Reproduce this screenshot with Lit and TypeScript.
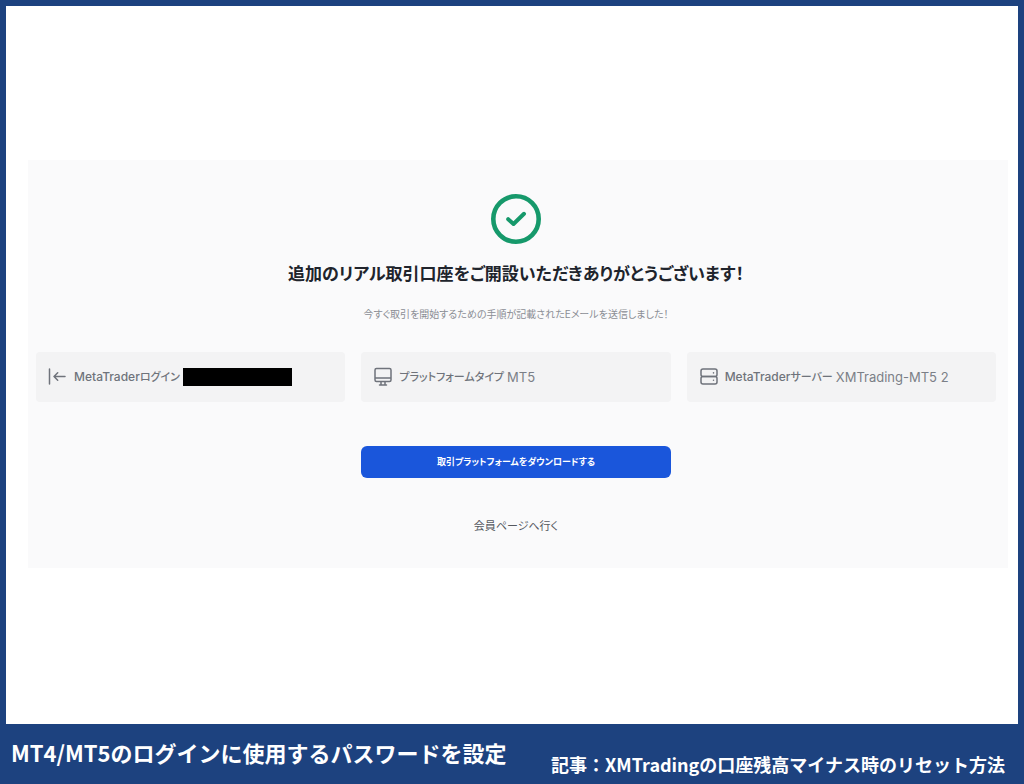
import { LitElement, html, css, svg } from "lit";
import { customElement } from "lit/decorators.js";

const icons = {
  login: svg`<path d="M1.500 2v15M6 9.500h11M9.700 5.800 6 9.500l3.700 3.700" />`,
  platform: svg`<path d="M3.500 1.500h13a1.500 1.500 0 0 1 1.500 1.500v10a1.500 1.500 0 0 1-1.500 1.500h-13A1.500 1.500 0 0 1 2 13V3A1.500 1.500 0 0 1 3.500 1.500zM2 11h16M8 14.500v3M12 14.500v3M6.500 18h7" />`,
  server: svg`<rect x="2" y="2" width="16" height="7.500" rx="2" /><rect x="2" y="9.500" width="16" height="7.500" rx="2" /><path d="M14.500 5.800v.1M14.500 13.200v.1" />`,
};

@customElement("app-root")
export class AppRoot extends LitElement {
  static styles = css`
    :host {
      display: flex;
      flex-direction: column;
      box-sizing: border-box;
      min-height: 100vh;
      padding: 6px 6px 0;
      background: #1d427f;
      font-family: Inter, "Noto Sans CJK JP", sans-serif;
    }
    .page {
      flex: 1;
      display: flex;
      flex-direction: column;
      justify-content: center;
      background: #fff;
      padding: 0 10px 2px 22px;
    }
    .panel {
      display: flex;
      flex-direction: column;
      align-items: center;
      background: #fafafb;
      padding: 32px 12px 32px 8px;
      font-feature-settings: "palt";
    }
    .check {
      display: block;
      width: 54px;
      height: 54px;
      fill: none;
      stroke: #16996b;
      stroke-linecap: round;
      stroke-linejoin: round;
    }
    h1 {
      margin: 12px 0 0;
      font-size: 17px;
      line-height: 32px;
      font-weight: 700;
      color: #20242c;
    }
    .note {
      margin: 14px 0 0;
      font-size: 10px;
      line-height: 20px;
      color: #8b8e95;
    }
    .cards {
      display: grid;
      grid-template-columns: repeat(3, 1fr);
      gap: 16px;
      width: 100%;
      margin: 28px 0 0;
    }
    .card {
      display: flex;
      align-items: center;
      box-sizing: border-box;
      height: 50px;
      padding: 0 12px;
      border-radius: 4px;
      background: #f3f3f4;
      font-size: 13px;
      line-height: 20px;
      color: #7b7f87;
    }
    .icon {
      width: 20px;
      height: 20px;
      margin-right: 6px;
      fill: none;
      stroke: #6f737b;
      stroke-width: 1.5;
      stroke-linecap: round;
      stroke-linejoin: round;
    }
    dt {
      font-size: 12px;
      font-weight: 500;
      color: #6f737b;
    }
    .kana {
      font-size: 11px;
    }
    dd {
      margin: 0 0 0 3px;
    }
    .redacted {
      width: 109px;
      height: 18px;
      background: #000;
    }
    .download {
      width: calc((100% - 32px) / 3);
      height: 32px;
      margin-top: 44px;
      padding: 0;
      border: 0;
      border-radius: 6px;
      background: #1a56db;
      color: #fff;
      font: 700 9px/20px Inter, "Noto Sans CJK JP", sans-serif;
      font-feature-settings: "palt";
      cursor: pointer;
    }
    .members {
      margin-top: 38px;
      font-size: 11px;
      line-height: 20px;
      color: #55585f;
      text-decoration: none;
    }
    .caption {
      display: flex;
      justify-content: space-between;
      align-items: center;
      box-sizing: border-box;
      height: 60px;
      padding: 0 13px 4px 5px;
      color: #fff;
      font-family: "Noto Sans CJK JP", sans-serif;
      font-weight: 700;
      white-space: nowrap;
    }
    .title {
      font-size: 22px;
      line-height: 32px;
    }
    .article {
      align-self: flex-end;
      font-size: 18px;
      line-height: 32px;
    }
  `;

  private card(icon: unknown, latin: string, kana: string, value: unknown) {
    return html`<div class="card">
      <svg class="icon" viewBox="0 0 20 20" aria-hidden="true">${icon}</svg>
      <dt>${latin}<span class="kana">${kana}</span></dt>
      <dd>${value}</dd>
    </div>`;
  }

  render() {
    return html`
      <main class="page">
        <section class="panel">
          <svg class="check" viewBox="0 0 54 54" aria-hidden="true">
            <circle cx="27" cy="27" r="22.700" stroke-width="4.600" />
            <path d="M19.200 27.200 24.500 32 35 21.800" stroke-width="4" />
          </svg>
          <h1>追加のリアル取引口座をご開設いただきありがとうございます！</h1>
          <p class="note">今すぐ取引を開始するための手順が記載されたEメールを送信しました！</p>
          <dl class="cards">
            ${this.card(icons.login, "MetaTrader", "ログイン", html`<div class="redacted"></div>`)}
            ${this.card(icons.platform, "", "プラットフォームタイプ", "MT5")}
            ${this.card(icons.server, "MetaTrader", "サーバー", "XMTrading-MT5 2")}
          </dl>
          <button class="download" type="button">取引プラットフォームをダウンロードする</button>
          <a class="members" href="#">会員ページへ行く</a>
        </section>
      </main>
      <footer class="caption">
        <span class="title">MT4/MT5のログインに使用するパスワードを設定</span>
        <span class="article">記事：XMTradingの口座残高マイナス時のリセット方法</span>
      </footer>
    `;
  }
}
